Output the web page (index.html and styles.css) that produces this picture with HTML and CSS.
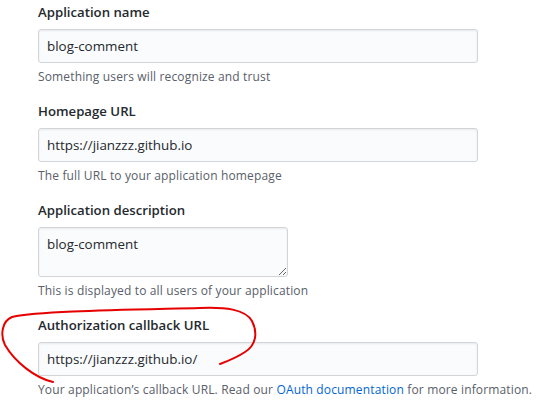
FILE: index.html
```html
<!DOCTYPE html>
<html lang="en">
<head>
<meta charset="utf-8">
<title>Register OAuth application</title>
<link rel="stylesheet" href="styles.css">
</head>
<body>
<form class="app-form">
  <div class="form-group">
    <label class="form-label" for="name">Application name</label>
    <input class="form-control" id="name" type="text" value="blog-comment">
    <p class="note">Something users will recognize and trust</p>
  </div>
  <div class="form-group">
    <label class="form-label" for="url">Homepage URL</label>
    <input class="form-control" id="url" type="text" value="https://jianzzz.github.io">
    <p class="note">The full URL to your application homepage</p>
  </div>
  <div class="form-group">
    <label class="form-label" for="desc">Application description</label>
    <textarea class="form-control textarea" id="desc">blog-comment</textarea>
    <p class="note">This is displayed to all users of your application</p>
  </div>
  <div class="form-group">
    <label class="form-label" for="cb">Authorization callback URL</label>
    <input class="form-control" id="cb" type="text" value="https://jianzzz.github.io/">
    <p class="note">Your application’s callback URL. Read our <a href="#" class="link">OAuth documentation</a> for more information.</p>
  </div>
  <svg class="annotation" width="548" height="407" viewBox="0 0 548 407" aria-hidden="true">
    <path d="M53,382 C35,378 15,362 5,345 C0,335 2,321 12,317 C40,311 120,310 200,308 C225,307 245,309 252,321 C258,333 256,345 245,352 C236,358 228,361 220,364" fill="none" stroke="#e60000" stroke-width="2" stroke-linecap="round" stroke-linejoin="round"/>
  </svg>
</form>
</body>
</html>
```
FILE: styles.css
```css
html, body {
  margin: 0;
  padding: 0;
  background: #ffffff;
}

body {
  font-family: "Open Sans", "Liberation Sans", Arial, sans-serif;
  color: #24292e;
  width: 548px;
  height: 407px;
  overflow: hidden;
}

.app-form {
  position: relative;
  padding: 2px 0 0 38px;
  margin: 0;
  height: 405px;
}

.form-group {
  margin: 0 0 15px 0;
  display: flex;
  flex-direction: column;
  align-items: flex-start;
}

.form-label {
  display: block;
  font-size: 13.2px;
  line-height: 21px;
  font-weight: 600;
  color: #24292e;
  margin-bottom: 6px;
}

.form-control {
  box-sizing: border-box;
  width: 440px;
  height: 34px;
  padding: 6px 8px;
  font-family: "Open Sans", "Liberation Sans", Arial, sans-serif;
  font-size: 13.4px;
  line-height: 20px;
  color: #24292e;
  background: #fafbfc;
  border: 1px solid #d1d5da;
  border-radius: 3px;
  box-shadow: inset 0 1px 2px rgba(27, 31, 35, 0.075);
  outline: none;
  margin: 0;
}

.textarea {
  width: 250px;
  height: 50px;
  resize: vertical;
  display: block;
}

.note {
  margin: 5px 0 0 0;
  font-size: 12px;
  line-height: 18px;
  letter-spacing: 0.15px;
  color: #586069;
}

.link {
  color: #0366d6;
  text-decoration: none;
}

.annotation {
  position: absolute;
  left: 0;
  top: 0;
  pointer-events: none;
}
```
